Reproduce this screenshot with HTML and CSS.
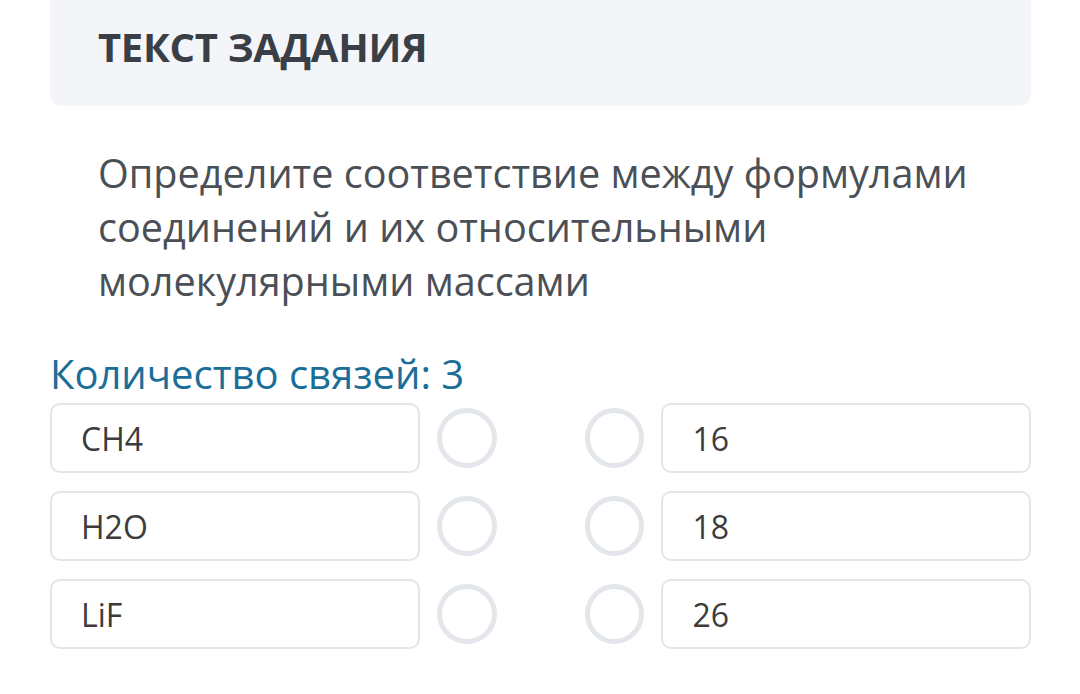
FILE: index.html
```html
<!DOCTYPE html>
<html lang="ru">
<head>
  <meta charset="UTF-8" />
  <meta name="viewport" content="width=device-width, initial-scale=1.0" />
  <title>Текст задания</title>
  <link rel="stylesheet" href="styles.css">
</head>
<body>
  <div class="task">
    <div class="task-head">
      <h2>ТЕКСТ ЗАДАНИЯ</h2>
    </div>
    <p class="task-text">Определите соответствие между формулами соединений и их относительными молекулярными массами</p>

    <div class="links-count">Количество связей: 3</div>
    <div class="match-list">
      <div class="match-row">
        <div class="match-item">CH4</div>
        <span class="dot"></span>
        <span class="dot"></span>
        <div class="match-item">16</div>
      </div>
      <div class="match-row">
        <div class="match-item">H2O</div>
        <span class="dot"></span>
        <span class="dot"></span>
        <div class="match-item">18</div>
      </div>
      <div class="match-row">
        <div class="match-item">LiF</div>
        <span class="dot"></span>
        <span class="dot"></span>
        <div class="match-item">26</div>
      </div>
    </div>
  </div>
</body>
</html>
```

FILE: styles.css
```css
body {
  margin: 0;
  font-family: "Open Sans", "Noto Sans", sans-serif;
  background-color: #fff;
  color: #333;
}
.task {
  width: 981px;
  padding-left: 50px;
}
.task-head {
  background-color: #f3f5f8;
  border-radius: 0 0 12px 12px;
  height: 106px;
  display: flex;
  align-items: center;
  padding-left: 48px;
  padding-bottom: 14px;
  box-sizing: border-box;
}
.task-head h2 {
  margin: 0;
  font-size: 40px;
  font-weight: 700;
  letter-spacing: -0.3px;
  color: #3a3f47;
}
.task-text {
  margin: 40px 0 0 48px;
  font-size: 39.6px;
  line-height: 54px;
  color: #4b5057;
  max-width: 890px;
}
.links-count {
  margin-top: 42px;
  font-size: 40px;
  line-height: 48px;
  color: #1b6e98;
}
.match-list {
  display: flex;
  flex-direction: column;
  gap: 18px;
  margin-top: 5px;
}
.match-row {
  display: flex;
  align-items: center;
}
.match-item {
  width: 370px;
  height: 70px;
  box-sizing: border-box;
  border: 2px solid #e3e5e8;
  border-radius: 10px;
  padding-left: 29px;
  display: flex;
  align-items: center;
  font-size: 32px;
  color: #3c3c3c;
}
.dot {
  width: 60px;
  height: 60px;
  box-sizing: border-box;
  border: 5px solid #e3e6ea;
  border-radius: 50%;
  margin-left: 17px;
}
.dot + .dot {
  margin-left: 88px;
  margin-right: 17px;
}
```
